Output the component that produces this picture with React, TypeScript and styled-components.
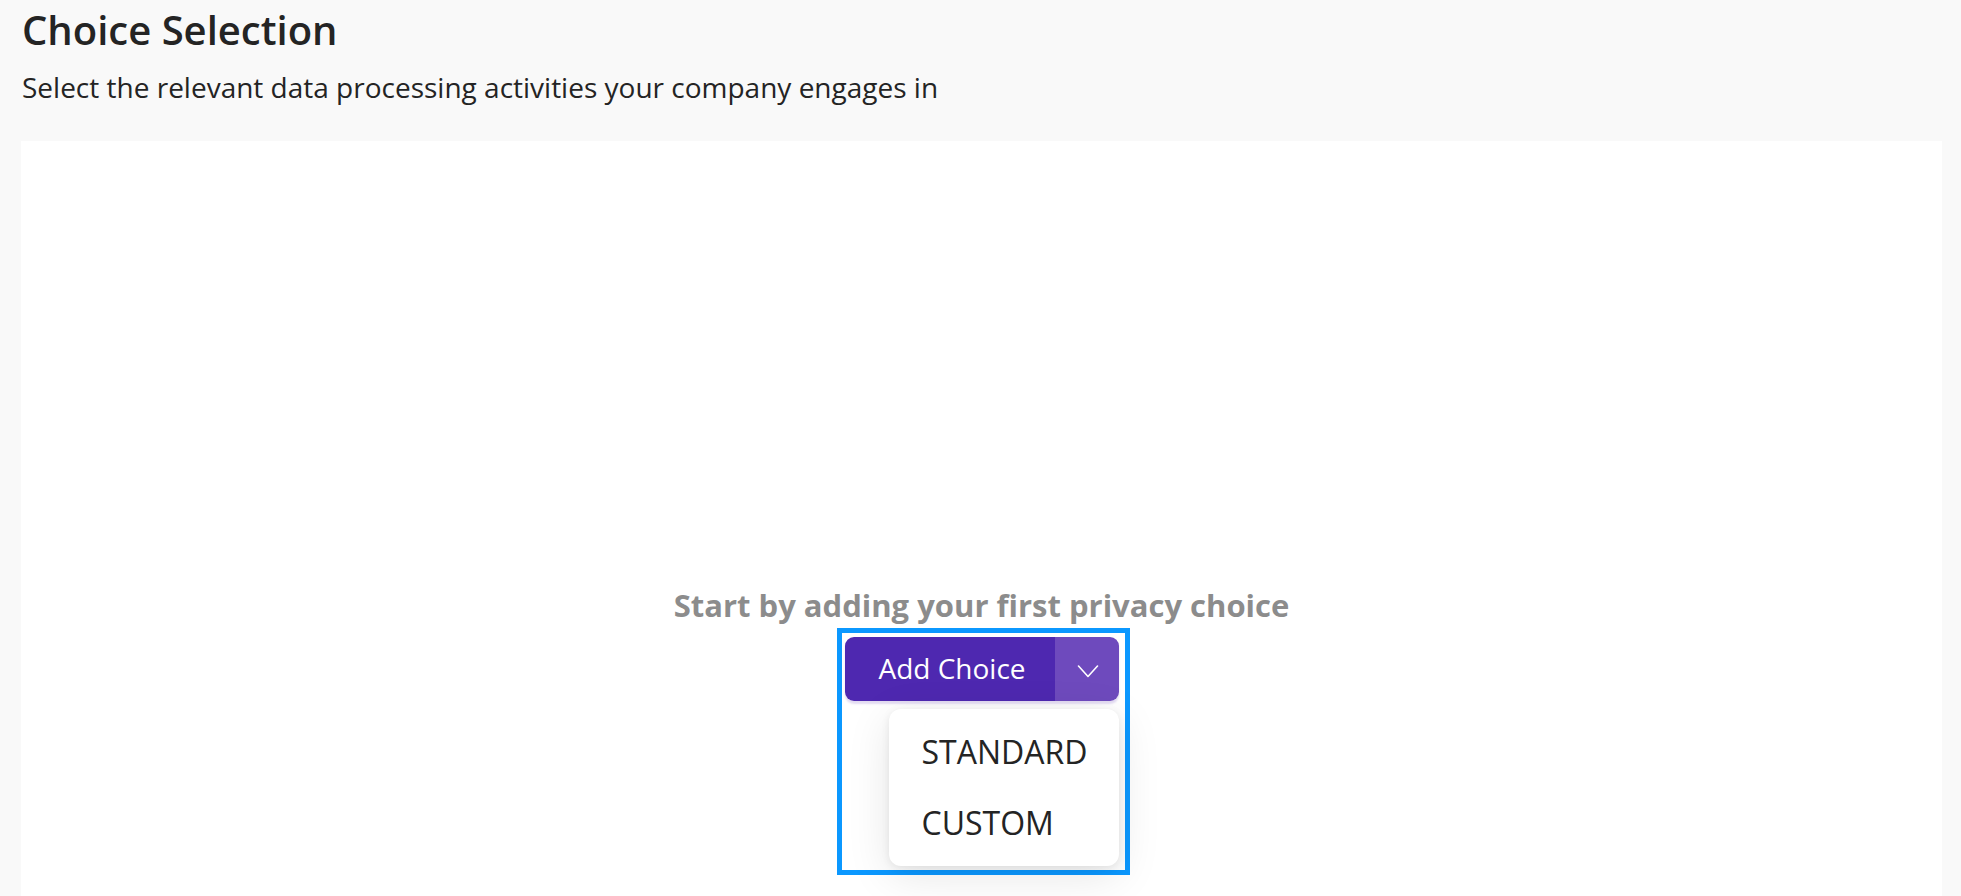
import React from "react";
import styled, { createGlobalStyle } from "styled-components";

const Global = createGlobalStyle`
  html, body {
    margin: 0;
    padding: 0;
    background: #f9f9f9;
    font-family: "Open Sans", "Liberation Sans", sans-serif;
    color: #242424;
  }
  * { box-sizing: border-box; }
`;

const Page = styled.div`
  min-height: 896px;
  padding: 6px 19px 0 21px;
  display: flex;
  flex-direction: column;
`;

const Title = styled.h1`
  margin: 0 0 0 1px;
  font-size: 40px;
  line-height: 48px;
  font-weight: 600;
  color: #242424;
`;

const Subtitle = styled.p`
  margin: 14px 0 0 1px;
  font-size: 28px;
  line-height: 38px;
  font-weight: 400;
  color: #242424;
`;

const Panel = styled.section`
  margin-top: 35px;
  flex: 1;
  background: #ffffff;
  display: flex;
  flex-direction: column;
  align-items: center;
  padding-top: 445px;
  min-height: 754px;
`;

const EmptyText = styled.div`
  font-size: 31px;
  line-height: 38px;
  font-weight: 700;
  color: #8c8c8c;
`;

const Highlight = styled.div`
  margin-top: 4px;
  margin-left: 3px;
  border: 5px solid #0b98ff;
  padding: 4px 6px 4px 3px;
  display: flex;
  flex-direction: column;
  align-items: flex-end;
  gap: 8px;
`;

const SplitButton = styled.div`
  display: flex;
  height: 64px;
  border-radius: 9px;
  overflow: hidden;
  box-shadow: 0 3px 2px rgba(80, 40, 176, 0.16);
`;

const MainAction = styled.button`
  width: 210px;
  height: 64px;
  border: none;
  background: #4e28b0;
  color: #ffffff;
  font-family: "Open Sans", "Liberation Sans", sans-serif;
  font-size: 28px;
  font-weight: 400;
  padding: 0 0 2px 5px;
  cursor: pointer;
`;

const ToggleAction = styled.button`
  width: 64px;
  height: 64px;
  border: none;
  background: #6e4abd;
  display: flex;
  align-items: center;
  justify-content: center;
  padding: 5px 0 0 2px;
  cursor: pointer;
`;

const Menu = styled.div`
  width: 230px;
  background: #ffffff;
  border-radius: 12px;
  padding: 7px 0 8px;
  box-shadow: 0 10px 44px rgba(0, 0, 0, 0.1), 0 2px 8px rgba(0, 0, 0, 0.08);
`;

const MenuItem = styled.div`
  height: 71px;
  line-height: 71px;
  padding-left: 33px;
  font-size: 32px;
  font-weight: 400;
  color: #242424;
`;

export default function App() {
  return (
    <>
      <Global />
      <Page>
        <Title>Choice Selection</Title>
        <Subtitle>Select the relevant data processing activities your company engages in</Subtitle>
        <Panel>
          <EmptyText>Start by adding your first privacy choice</EmptyText>
          <Highlight>
            <SplitButton>
              <MainAction>Add Choice</MainAction>
              <ToggleAction aria-label="More options">
                <svg width="22" height="13" viewBox="0 0 22 13" fill="none">
                  <polyline points="1.5,1 11,11.5 20.5,1" stroke="#ffffff" strokeWidth="1.6" strokeLinecap="round" strokeLinejoin="round" />
                </svg>
              </ToggleAction>
            </SplitButton>
            <Menu>
              <MenuItem>STANDARD</MenuItem>
              <MenuItem>CUSTOM</MenuItem>
            </Menu>
          </Highlight>
        </Panel>
      </Page>
    </>
  );
}
